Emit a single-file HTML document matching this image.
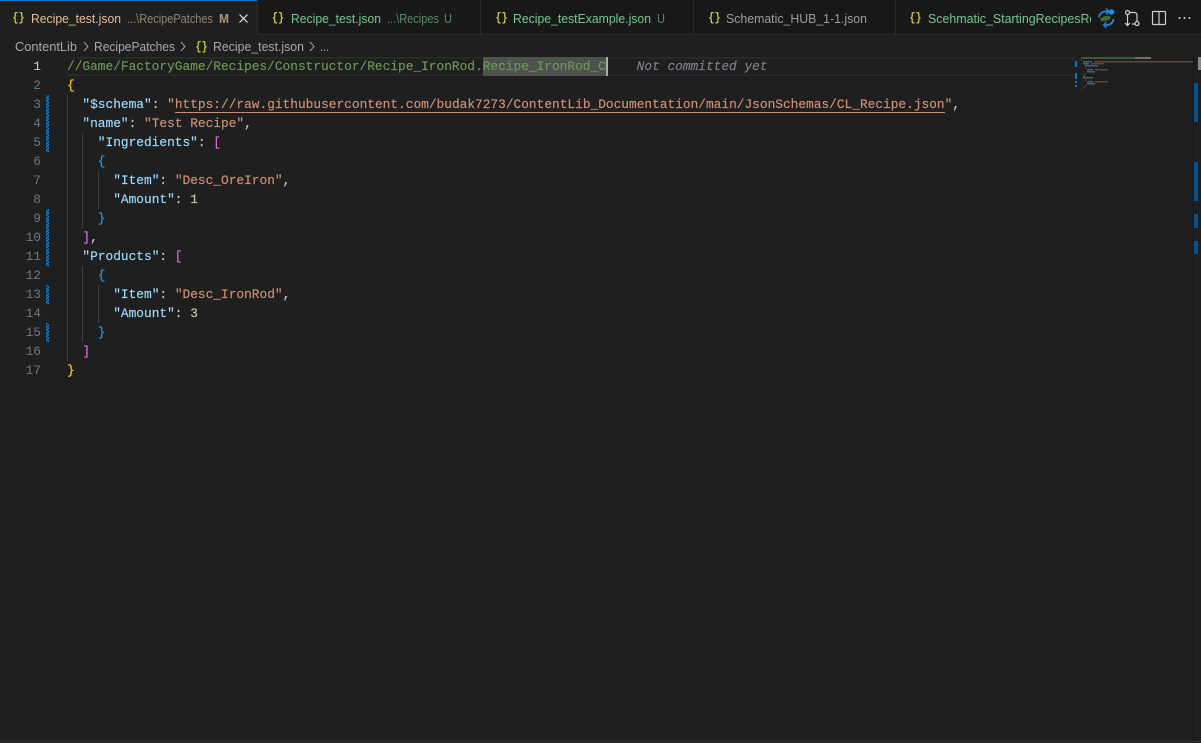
<!DOCTYPE html>
<html><head><meta charset="utf-8"><title>Recipe_test.json</title>
<style>
html,body{margin:0;padding:0;background:#1f1f1f;width:1201px;height:743px;overflow:hidden}
#a{position:absolute;left:0;top:0;width:1201px;height:743px;overflow:hidden}
.l{position:absolute;left:67px;height:19px;font:12.83px/19px "Liberation Mono",monospace;white-space:pre;color:#ccc;-webkit-text-stroke:.15px currentColor}
.n{position:absolute;left:0;width:41px;text-align:right;height:19px;font:12.83px/19px "Liberation Mono",monospace;color:#6e7681}
.g{position:absolute;width:1px;background:#404040}
.d{position:absolute;left:46px;width:3px;background:repeating-linear-gradient(-45deg,#0a84e0 0 1.5px,#1f1f1f 1.5px 2.3px)}
.k{color:#9cdcfe}.s{color:#ce9178}.u{color:#ce9178;border-bottom:1px solid #ce9178}.v{color:#b5cea8}.c{color:#6a9955}.y{color:#ffd700}.p{color:#da70d6}.b{color:#179fff}
svg{position:absolute;left:0;top:0}
svg text{font-family:"Liberation Sans",sans-serif;font-size:12.5px}
svg text.i{font-family:"Liberation Mono",monospace;font-size:12px;font-weight:bold;fill:#cbcb41}
</style></head><body><div id="a">
<svg width="1201" height="743" viewBox="0 0 1201 743">
<rect x="0" y="0" width="1201" height="35" fill="#181818"/>
<rect x="0" y="34" width="1201" height="1" fill="#2b2b2b"/>
<rect x="0" y="0" width="257" height="35" fill="#1f1f1f"/>
<rect x="0" y="0" width="257" height="1" fill="#0078d4"/>
<rect x="257" y="0" width="1" height="34" fill="#2b2b2b"/>
<rect x="480" y="0" width="1" height="34" fill="#2b2b2b"/>
<rect x="693" y="0" width="1" height="34" fill="#2b2b2b"/>
<rect x="895" y="0" width="1" height="34" fill="#2b2b2b"/>

<text class="i" x="12.5" y="21" textLength="12" lengthAdjust="spacingAndGlyphs">{}</text>
<text x="31" y="23" fill="#e2c08d" textLength="90" lengthAdjust="spacingAndGlyphs">Recipe_test.json</text>
<text x="127" y="23" fill="#8f8672" style="font-size:12.5px" textLength="86" lengthAdjust="spacingAndGlyphs">...\RecipePatches</text>
<text x="219" y="23" fill="#a89a7c" font-weight="bold" textLength="10" lengthAdjust="spacingAndGlyphs">M</text>
<path d="M239.5 14.5l8 8M247.5 14.5l-8 8" stroke="#e8e8e8" stroke-width="1.2" fill="none"/>

<text class="i" x="272" y="21" textLength="12" lengthAdjust="spacingAndGlyphs">{}</text>
<text x="291" y="23" fill="#73c991" textLength="90" lengthAdjust="spacingAndGlyphs">Recipe_test.json</text>
<text x="387" y="23" fill="#5c8a6d" style="font-size:12.5px" textLength="52" lengthAdjust="spacingAndGlyphs">...\Recipes</text>
<text x="444" y="23" fill="#5c8a6d" textLength="8" lengthAdjust="spacingAndGlyphs">U</text>

<text class="i" x="495.5" y="21" textLength="12" lengthAdjust="spacingAndGlyphs">{}</text>
<text x="513" y="23" fill="#73c991" textLength="138" lengthAdjust="spacingAndGlyphs">Recipe_testExample.json</text>
<text x="657" y="23" fill="#5c8a6d" textLength="8" lengthAdjust="spacingAndGlyphs">U</text>

<text class="i" x="708.5" y="21" textLength="12" lengthAdjust="spacingAndGlyphs">{}</text>
<text x="726" y="23" fill="#9d9d9d" textLength="141" lengthAdjust="spacingAndGlyphs">Schematic_HUB_1-1.json</text>

<text class="i" x="909.5" y="21" textLength="12" lengthAdjust="spacingAndGlyphs">{}</text>
<clipPath id="t5"><rect x="925" y="0" width="166" height="34"/></clipPath>
<g clip-path="url(#t5)"><text x="928" y="23" fill="#73c991" textLength="198" lengthAdjust="spacingAndGlyphs">Scehmatic_StartingRecipesRef.json</text></g>

<!-- actions -->
<path d="M1099 17.5a6.5 6.5 0 0 1 6.5-6h2.5M1113.5 19a6.5 6.5 0 0 1-6.5 6h-2.5" stroke="#1f86dc" stroke-width="1.8" fill="none"/>
<path d="M1106 8.5l3 3-3 3M1106.5 22l-3 3 3 3" stroke="#1f86dc" stroke-width="1.4" fill="none"/>
<ellipse cx="1105.5" cy="18.5" rx="5.5" ry="2.4" transform="rotate(-15 1105.5 18.5)" fill="#3f6b2e"/>
<circle cx="1111.5" cy="12" r="2.8" fill="#1c8cf0"/>
<g stroke="#cfcfcf" stroke-width="1.2" fill="none">
<circle cx="1127.5" cy="12.5" r="2"/><circle cx="1137" cy="23.5" r="2"/>
<path d="M1127.5 14.5v11M1130 12.5h4.5a2.5 2.5 0 0 1 2.5 2.5v6.5M1125 23l2.5 2.5L1130 23"/>
<path d="M1132 24h3"/>
<rect x="1152.5" y="11.5" width="13" height="13" rx="1"/><path d="M1159 11.5v13"/>
</g>
<g fill="#cfcfcf"><circle cx="1179.5" cy="18" r="1"/><circle cx="1184.5" cy="18" r="1"/><circle cx="1189.5" cy="18" r="1"/></g>

<!-- breadcrumb -->
<g fill="#a9a9a9">
<text x="15" y="51" textLength="62" lengthAdjust="spacingAndGlyphs">ContentLib</text>
<text x="94" y="51" textLength="81" lengthAdjust="spacingAndGlyphs">RecipePatches</text>
<text x="213" y="51" textLength="91" lengthAdjust="spacingAndGlyphs">Recipe_test.json</text>
<text x="320" y="51" textLength="9" lengthAdjust="spacingAndGlyphs">...</text>
</g>
<text class="i" x="195.5" y="50" textLength="12" lengthAdjust="spacingAndGlyphs">{}</text>
<path d="M84 42l4 4.5-4 4.5M181 42l4 4.5-4 4.5M310 42l4 4.5-4 4.5" stroke="#a0a0a0" stroke-width="1" fill="none"/>

<!-- current line -->
<rect x="67" y="57" width="1008" height="2" fill="#282828"/>
<rect x="67" y="74" width="1008" height="2" fill="#282828"/>
<rect x="483" y="57" width="123" height="19" fill="#4e514e"/>

<!-- overview ruler -->
<rect x="1193" y="57" width="1" height="684" fill="#141414"/>
<g fill="#04528f">
<rect x="1194" y="83" width="4" height="39"/><rect x="1194" y="162" width="4" height="39"/>
<rect x="1194" y="214" width="4" height="14"/><rect x="1194" y="241" width="4" height="13"/>
</g>
<rect x="1198" y="57" width="3" height="13" fill="#8a8a8a"/>
<rect x="0" y="741" width="1201" height="1" fill="#333"/>

<!-- minimap -->
<g fill="#0078d4">
<rect x="1075" y="61" width="2" height="6"/><rect x="1075" y="73" width="2" height="6"/>
<rect x="1075" y="81" width="2" height="2"/><rect x="1075" y="85" width="2" height="2"/>
</g>
<rect x="1081" y="57" width="54" height="2" fill="#3f5639"/>
<rect x="1135" y="57" width="16" height="2" fill="#6f6f6f"/>
<g fill="#4a5f6b">
<rect x="1083" y="61" width="9" height="1.5"/><rect x="1083" y="63" width="6" height="1.5"/>
<rect x="1085" y="65" width="13" height="1.5"/><rect x="1087" y="69" width="6" height="1.5"/>
<rect x="1087" y="71" width="8" height="1.5"/><rect x="1083" y="77" width="10" height="1.5"/>
<rect x="1087" y="81" width="6" height="1.5"/><rect x="1087" y="83" width="8" height="1.5"/>
</g>
<g fill="#5a4840">
<rect x="1094" y="61" width="99" height="1.5"/><rect x="1091" y="63" width="13" height="1.5"/>
<rect x="1095" y="69" width="13" height="1.5"/><rect x="1095" y="81" width="13" height="1.5"/>
</g>
<g fill="#444">
<rect x="1081" y="59" width="1" height="2"/><rect x="1085" y="67" width="1" height="2"/>
<rect x="1085" y="73" width="1" height="2"/><rect x="1083" y="75" width="2" height="2"/>
<rect x="1085" y="79" width="1" height="2"/><rect x="1085" y="85" width="1" height="2"/>
<rect x="1083" y="87" width="1" height="2"/><rect x="1081" y="89" width="1" height="2"/>
</g>

<!-- cursor -->
<rect x="606" y="57" width="2" height="19" fill="#aeafad"/>
</svg>

<div class="g" style="left:67px;top:95px;height:266px"></div>
<div class="g" style="left:82px;top:133px;height:95px"></div>
<div class="g" style="left:82px;top:266px;height:76px"></div>
<div class="g" style="left:98px;top:171px;height:38px"></div>
<div class="g" style="left:98px;top:285px;height:38px"></div>

<div class="d" style="top:95px;height:57px"></div>
<div class="d" style="top:209px;height:57px"></div>
<div class="d" style="top:285px;height:19px"></div>
<div class="d" style="top:323px;height:19px"></div>

<div class="n" style="top:57px;color:#ccc">1</div>
<div class="n" style="top:76px">2</div>
<div class="n" style="top:95px">3</div>
<div class="n" style="top:114px">4</div>
<div class="n" style="top:133px">5</div>
<div class="n" style="top:152px">6</div>
<div class="n" style="top:171px">7</div>
<div class="n" style="top:190px">8</div>
<div class="n" style="top:209px">9</div>
<div class="n" style="top:228px">10</div>
<div class="n" style="top:247px">11</div>
<div class="n" style="top:266px">12</div>
<div class="n" style="top:285px">13</div>
<div class="n" style="top:304px">14</div>
<div class="n" style="top:323px">15</div>
<div class="n" style="top:342px">16</div>
<div class="n" style="top:361px">17</div>

<div class="l" style="top:57px"><span class="c">//Game/FactoryGame/Recipes/Constructor/Recipe_IronRod.Recipe_IronRod_C</span><span style="color:#7c8187;font-style:italic">    Not committed yet</span></div>
<div class="l y" style="top:76px">{</div>
<div class="l" style="top:95px">  <span class="k">"$schema"</span>: <span class="s">"</span><span class="u">https://raw.githubusercontent.com/budak7273/ContentLib_Documentation/main/JsonSchemas/CL_Recipe.json</span><span class="s">"</span>,</div>
<div class="l" style="top:114px">  <span class="k">"name"</span>: <span class="s">"Test Recipe"</span>,</div>
<div class="l" style="top:133px">    <span class="k">"Ingredients"</span>: <span class="p">[</span></div>
<div class="l b" style="top:152px">    {</div>
<div class="l" style="top:171px">      <span class="k">"Item"</span>: <span class="s">"Desc_OreIron"</span>,</div>
<div class="l" style="top:190px">      <span class="k">"Amount"</span>: <span class="v">1</span></div>
<div class="l b" style="top:209px">    }</div>
<div class="l" style="top:228px">  <span class="p">]</span>,</div>
<div class="l" style="top:247px">  <span class="k">"Products"</span>: <span class="p">[</span></div>
<div class="l b" style="top:266px">    {</div>
<div class="l" style="top:285px">      <span class="k">"Item"</span>: <span class="s">"Desc_IronRod"</span>,</div>
<div class="l" style="top:304px">      <span class="k">"Amount"</span>: <span class="v">3</span></div>
<div class="l b" style="top:323px">    }</div>
<div class="l p" style="top:342px">  ]</div>
<div class="l y" style="top:361px">}</div>
</div></body></html>
